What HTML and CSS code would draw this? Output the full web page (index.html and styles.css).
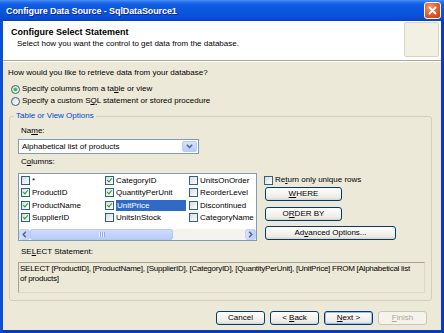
FILE: index.html
```html
<!DOCTYPE html>
<html>
<head>
<meta charset="utf-8">
<link rel="stylesheet" href="styles.css">
</head>
<body>
<div class="window">
  <div class="titlebar">
    <span class="title">Configure Data Source - SqlDataSource1</span>
    <span class="close"><svg width="15" height="15" viewBox="0 0 15 15"><path d="M4.5 4.5 L10.5 10.5 M10.5 4.5 L4.5 10.5" stroke="#fff" stroke-width="1.8" stroke-linecap="round"/></svg></span>
  </div>
  <div class="client">
    <div class="header">
      <div class="header-text">
        <div class="h-title">Configure Select Statement</div>
        <div class="h-sub">Select how you want the control to get data from the database.</div>
      </div>
      <div class="h-icon"></div>
    </div>
    <div class="body">
      <div class="question">How would you like to retrieve data from your database?</div>
      <div class="radio-row"><span class="radio checked"></span>Specify columns from a ta<u>b</u>le or view</div>
      <div class="radio-row"><span class="radio"></span>Specify a custom S<u>Q</u>L statement or stored procedure</div>
      <fieldset class="group">
        <legend>Table or View Options</legend>
        <div class="label">Na<u>m</u>e:</div>
        <div class="combo">
          <span class="combo-text">Alphabetical list of products</span>
          <span class="combo-btn"><svg width="7" height="5" viewBox="0 0 7 5"><path d="M0.8 0.8 L3.5 3.6 L6.2 0.8" fill="none" stroke="#4d6185" stroke-width="1.4"/></svg></span>
        </div>
        <div class="label cols-label">C<u>o</u>lumns:</div>
        <div class="cols-row">
          <div class="listbox">
            <div class="items">
              <div class="item"><span class="cb"></span><span class="txt">*</span></div>
              <div class="item"><span class="cb on"></span><span class="txt">ProductID</span></div>
              <div class="item"><span class="cb on"></span><span class="txt">ProductName</span></div>
              <div class="item"><span class="cb on"></span><span class="txt">SupplierID</span></div>
              <div class="item"><span class="cb on"></span><span class="txt">CategoryID</span></div>
              <div class="item"><span class="cb on"></span><span class="txt">QuantityPerUnit</span></div>
              <div class="item"><span class="cb on"></span><span class="txt sel">UnitPrice</span></div>
              <div class="item"><span class="cb"></span><span class="txt">UnitsInStock</span></div>
              <div class="item"><span class="cb"></span><span class="txt">UnitsOnOrder</span></div>
              <div class="item"><span class="cb"></span><span class="txt">ReorderLevel</span></div>
              <div class="item"><span class="cb"></span><span class="txt">Discontinued</span></div>
              <div class="item"><span class="cb"></span><span class="txt">CategoryName</span></div>
            </div>
            <div class="hscroll">
              <span class="sbtn"><svg width="5" height="7" viewBox="0 0 5 7"><path d="M3.8 0.8 L1.2 3.5 L3.8 6.2" fill="none" stroke="#4d6185" stroke-width="1.4"/></svg></span>
              <span class="thumb"><span class="grip"></span></span>
              <span class="track"></span>
              <span class="sbtn"><svg width="5" height="7" viewBox="0 0 5 7"><path d="M1.2 0.8 L3.8 3.5 L1.2 6.2" fill="none" stroke="#4d6185" stroke-width="1.4"/></svg></span>
            </div>
          </div>
          <div class="side">
            <div class="check-row"><span class="cb"></span>Re<u>t</u>urn only unique rows</div>
            <button class="btn w77 first"><u>W</u>HERE</button>
            <button class="btn w77 second">O<u>R</u>DER BY</button>
            <button class="btn w131 third">Ad<u>v</u>anced Options...</button>
          </div>
        </div>
        <div class="label sql-label">SE<u>L</u>ECT Statement:</div>
        <div class="sql">SELECT [ProductID], [ProductName], [SupplierID], [CategoryID], [QuantityPerUnit], [UnitPrice] FROM [Alphabetical list<br>of products]</div>
      </fieldset>
      <div class="footer">
        <button class="btn fbtn">Cancel</button>
        <button class="btn fbtn">&lt; <u>B</u>ack</button>
        <button class="btn fbtn default"><u>N</u>ext &gt;</button>
        <button class="btn fbtn disabled"><u>F</u>inish</button>
      </div>
    </div>
  </div>
</div>
</body>
</html>
```
FILE: styles.css
```css
html, body {
  margin: 0;
  padding: 0;
}
body {
  width: 444px;
  height: 333px;
  overflow: hidden;
  font-family: "Liberation Sans", Arial, sans-serif;
  font-size: 8px;
  color: #000;
  background: #ece9d8;
}
u { text-decoration: underline; text-underline-offset: 1px; }

.window {
  width: 444px;
  height: 333px;
  display: flex;
  flex-direction: column;
}
.titlebar {
  flex: none;
  height: 21px;
  box-sizing: border-box;
  display: flex;
  align-items: center;
  justify-content: space-between;
  padding: 0 3px 0 6px;
  background: linear-gradient(#4a95fb 0, #2a6eea 2px, #0d5ce3 5px, #0a56de 12px, #0a4fd6 17px, #0842c4 21px);
}
.title {
  color: #fff;
  font-weight: bold;
  font-size: 9px;
  letter-spacing: -0.1px;
  text-shadow: 1px 1px 0 #0b2a8c;
  padding-top: 1px;
}
.close {
  width: 15px;
  height: 15px;
  border: 1px solid #fff;
  border-radius: 3px;
  background: radial-gradient(circle at 35% 30%, #f29a6e 0, #e2592b 55%, #c33d15 100%);
  display: flex;
  align-items: center;
  justify-content: center;
}
.close svg { display: block; }

.client {
  flex: 1;
  display: flex;
  flex-direction: column;
  border: 3px solid #0b4fd8;
  border-top: 0;
  border-right-color: #0a3cbc;
  border-bottom-color: #0a3ab4;
  background: #ece9d8;
  min-height: 0;
}
.header {
  flex: none;
  height: 40px;
  box-sizing: border-box;
  background: #fff;
  border-bottom: 1px solid #aca899;
  display: flex;
  justify-content: space-between;
  padding: 1px 2px 0 8px;
}
.header-text { padding-top: 5px; }
.h-title {
  font-weight: bold;
  font-size: 9px;
  line-height: 11px;
}
.h-sub {
  line-height: 12px;
  margin-left: 6px;
}
.h-icon {
  width: 33px;
  height: 33px;
  border: 1px solid #d8d4c4;
  border-radius: 2px;
  background: #f2f0e3;
}

.body {
  flex: 1;
  display: flex;
  flex-direction: column;
  padding: 5px 9px 5px 5px;
  line-height: 12px;
  border-top: 1px solid #fff;
  min-height: 0;
}
.question { height: 12px; }
.radio-row {
  display: flex;
  align-items: center;
  height: 12px;
  padding-left: 3px;
}
.question + .radio-row { margin-top: 4px; }
.radio {
  width: 9px;
  height: 9px;
  box-sizing: border-box;
  border: 1px solid #2c628b;
  border-radius: 50%;
  background: linear-gradient(135deg, #dcdad0, #fff);
  margin-right: 2px;
  display: flex;
  align-items: center;
  justify-content: center;
}
.radio.checked::after {
  content: "";
  width: 3px;
  height: 3px;
  border-radius: 50%;
  background: #3fb43f;
  box-shadow: 0 0 0 0.6px #7ad07a;
}

.group {
  margin: 3px 0 0 1px;
  min-width: 0;
  padding: 3px 5px 7px 8px;
  border: 1px solid #d0d0bf;
  border-radius: 3px;
}
.group legend {
  color: #0046d5;
  padding: 0 2px;
  margin-left: -4px;
  line-height: 12px;
}
.label { height: 12px; line-height: 12px; padding-left: 3px; }
.combo {
  margin-top: 2px;
  width: 181px;
  height: 15px;
  box-sizing: border-box;
  border: 1px solid #7f9db9;
  background: #fff;
  display: flex;
  align-items: center;
  justify-content: space-between;
  padding: 0 1px 0 3px;
}
.combo-btn {
  width: 15px;
  height: 11px;
  box-sizing: border-box;
  border: 1px solid #b9cdf6;
  border-radius: 2px;
  background: linear-gradient(#d7e3fd, #b5cbf9);
  display: flex;
  align-items: center;
  justify-content: center;
}
.combo-btn svg, .sbtn svg { display: block; }
.cols-label { margin-top: 2px; }
.cols-row {
  display: flex;
  margin-top: 5px;
}
.listbox {
  width: 239px;
  height: 68px;
  box-sizing: border-box;
  border: 1px solid #7f9db9;
  background: #fff;
  overflow: hidden;
  flex: none;
}
.items {
  display: grid;
  grid-auto-flow: column;
  grid-template-columns: repeat(3, 84px);
  grid-template-rows: repeat(4, 12.5px);
  padding-left: 2px;
}
.item {
  display: flex;
  align-items: center;
  white-space: nowrap;
  min-width: 0;
}
.cb {
  flex: none;
  width: 9px;
  height: 9px;
  box-sizing: border-box;
  border: 1px solid #2c628b;
  background: linear-gradient(135deg, #dcdad0, #fff);
  margin-right: 2px;
  position: relative;
}
.cb.on::after {
  content: "";
  position: absolute;
  left: 2px;
  top: 0px;
  width: 2px;
  height: 4px;
  border-right: 1.5px solid #21a121;
  border-bottom: 1.5px solid #21a121;
  transform: rotate(40deg);
}
.txt { line-height: 11px; }
.txt.sel {
  background: #316ac5;
  color: #fff;
  width: 70px;
  height: 11px;
  padding-left: 1px;
  box-sizing: border-box;
}
.hscroll {
  margin-top: 5px;
  height: 11px;
  display: flex;
}
.sbtn {
  width: 11px;
  height: 11px;
  box-sizing: border-box;
  border: 1px solid #c3d3fd;
  border-radius: 2px;
  background: linear-gradient(90deg, #d5e1fd, #bccffa);
  display: flex;
  align-items: center;
  justify-content: center;
  flex: none;
}
.thumb {
  width: 143px;
  height: 11px;
  box-sizing: border-box;
  border: 1px solid #b4c8f6;
  border-radius: 2px;
  background: linear-gradient(#cfdcfd, #b9ccf9);
  display: flex;
  align-items: center;
  justify-content: center;
  flex: none;
}
.grip {
  width: 6px;
  height: 5px;
  background: repeating-linear-gradient(90deg, #eef3ff 0 1px, #8faaf0 1px 2px);
}
.track {
  flex: 1;
  background: #f4f3ee;
}
.side {
  margin-left: 7px;
  display: flex;
  flex-direction: column;
  align-items: flex-start;
}
.check-row {
  display: flex;
  align-items: center;
  height: 12px;
  margin-top: 1px;
}
.btn {
  box-sizing: border-box;
  height: 14px;
  padding: 0;
  border: 1px solid #003c74;
  border-radius: 3px;
  background: linear-gradient(#ffffff 0, #f7f6f2 35%, #ecebe5 80%, #d8d3c8 100%);
  font-family: "Liberation Sans", Arial, sans-serif;
  font-size: 8px;
  line-height: 12px;
  color: #000;
  text-align: center;
}
.w77 { width: 77px; margin-left: 1px; }
.w131 { width: 131px; margin-left: 1px; }
.first { margin-top: 1px; }
.second { margin-top: 6px; }
.third { margin-top: 5px; }
.sql-label { margin-top: 5px; }
.sql {
  margin-top: 4px;
  width: 407px;
  height: 31px;
  box-sizing: border-box;
  border: 1px solid #a5a28f;
  border-right-color: #dcd9c8;
  border-bottom-color: #dcd9c8;
  background: #ece9d8;
  padding: 1px 1px 0 1px;
  line-height: 10px;
  letter-spacing: -0.25px;
  white-space: nowrap;
  overflow: hidden;
}
.footer {
  margin-top: auto;
  display: flex;
  justify-content: flex-end;
  gap: 5px;
  padding-right: 5px;
}
.fbtn { width: 49px; }
.default {
  box-shadow: inset 0 0 0 1px #9bbbf3;
}
.disabled {
  border-color: #c9c7ba;
  color: #aca899;
  background: #f5f4ea;
}
```
